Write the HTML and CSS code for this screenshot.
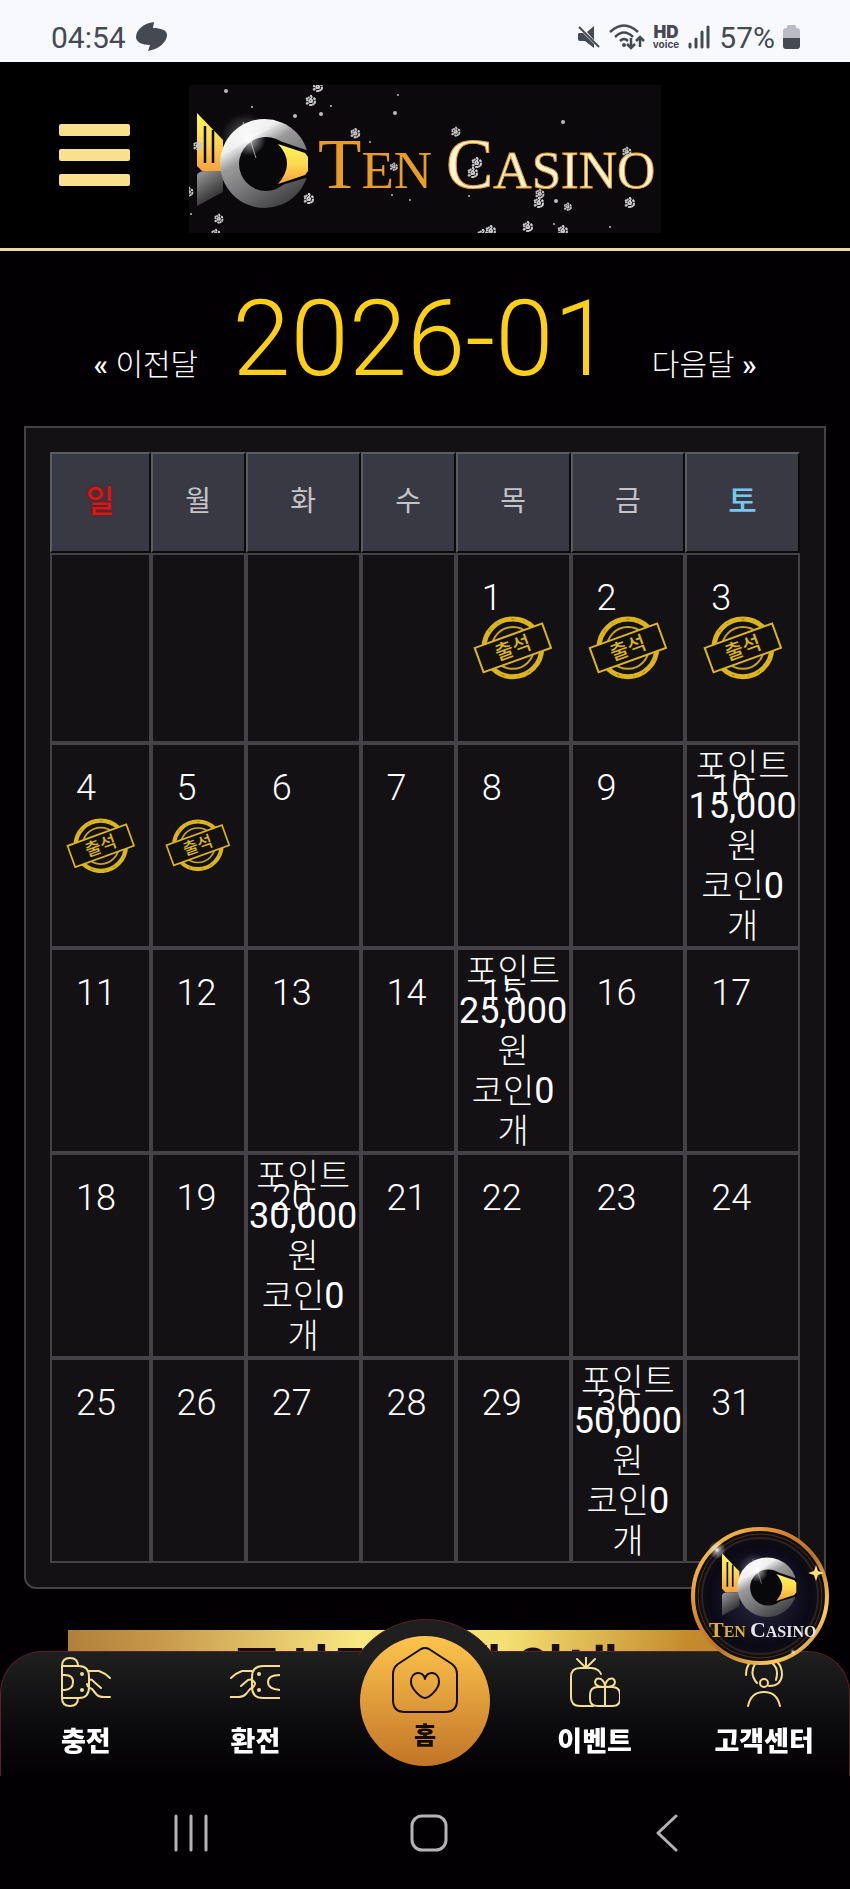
FILE: index.html
```
<!DOCTYPE html>
<html lang="ko">
  <head>
    <meta charset="UTF-8" />
    <meta name="viewport" content="width=device-width, initial-scale=1.0" />
    <title>Ten Casino</title>
    <link rel="stylesheet" href="styles.css">
  </head>
  <body>
    <!-- Shared graphics -->
    <svg class="defs" width="0" height="0" aria-hidden="true">
      <defs>
        <linearGradient id="gold" x1="0" y1="0" x2="0" y2="1">
          <stop offset="0" stop-color="#fff75a" />
          <stop offset="0.5" stop-color="#fdd84f" />
          <stop offset="1" stop-color="#f7a23c" />
        </linearGradient>
        <linearGradient id="silver" x1="0" y1="0" x2="0.6" y2="1">
          <stop offset="0" stop-color="#fff" />
          <stop offset="0.3" stop-color="#f0f0f0" />
          <stop offset="0.45" stop-color="#9a9a9a" />
          <stop offset="0.7" stop-color="#77777a" />
          <stop offset="1" stop-color="#454547" />
        </linearGradient>
        <linearGradient id="tail" x1="0" y1="0" x2="0.5" y2="1">
          <stop offset="0" stop-color="#9d9d9d" />
          <stop offset="1" stop-color="#252527" />
        </linearGradient>
        <radialGradient id="flare">
          <stop offset="0" stop-color="#fff" />
          <stop offset="0.3" stop-color="#fff" stop-opacity="0.5" />
          <stop offset="1" stop-color="#fff" stop-opacity="0" />
        </radialGradient>
        <linearGradient id="ring" x1="0" y1="0" x2="1" y2="1">
          <stop offset="0" stop-color="#ffd75e" />
          <stop offset="0.35" stop-color="#d9822b" />
          <stop offset="0.55" stop-color="#b8742a" />
          <stop offset="0.8" stop-color="#ffc860" />
          <stop offset="1" stop-color="#a9641f" />
        </linearGradient>
        <radialGradient id="night">
          <stop offset="0" stop-color="#2a2944" />
          <stop offset="0.75" stop-color="#0b0916" />
          <stop offset="1" stop-color="#14100f" />
        </radialGradient>
      </defs>
      <symbol id="mark" viewBox="0 0 112 96">
        <circle cx="48" cy="24" r="24" fill="url(#flare)" opacity="0.5" />
        <path d="M0 0 26 27V58H5L0 53Z" fill="url(#gold)" />
        <path d="M8 13v37M16 17v33" stroke="#0b090c" stroke-width="2.5" />
        <path d="M0 62Q2 58 8 58H26V79L0 93Z" fill="url(#tail)" />
        <circle cx="67.500" cy="50.500" r="44.500" fill="url(#silver)" />
        <circle cx="69" cy="51" r="27" fill="#08070a" />
        <path d="M77 26 112 38V64L78 74 94 50Z" fill="#08070a" />
        <path d="M81 31 108 40 111 44V58L108 62 81 71Q99 50 81 31Z" fill="url(#gold)" />
        <circle cx="52" cy="26" r="17" fill="url(#flare)" />
        <path d="M46 9 53 26 59 45M35 36 53 25 72 15" fill="none" stroke="#fff" stroke-width="1" opacity="0.6" />
      </symbol>
      <symbol id="flake" viewBox="0 0 16 16">
        <g fill="none" stroke="#c8c8c8" stroke-width="2" stroke-dasharray="2 1">
          <path d="M8 2V14M3 5 13 11M3 11 13 5" />
          <circle cx="8" cy="8" r="4" />
        </g>
      </symbol>
      <symbol id="stamp" viewBox="0 0 80 64">
        <circle cx="40" cy="32" r="29" fill="none" stroke="#dcb41c" stroke-width="5" />
        <circle cx="40" cy="32" r="29" fill="none" stroke="#8d7414" stroke-width="1" stroke-dasharray="3 9 1 14" />
        <circle cx="40" cy="32" r="21" fill="none" stroke="#c9a51e" stroke-width="2" />
        <g transform="rotate(-20 40 32)">
          <rect x="4" y="19" width="72" height="26" fill="#12100f" stroke="#dcb41c" stroke-width="2" />
          <text x="40" y="39" text-anchor="middle" class="stamp-text">출석</text>
        </g>
      </symbol>
    </svg>

    <div class="status-bar">
      <span class="clock">04:54</span>
      <svg class="app-dot" width="32" height="30" viewBox="0 0 32 30">
        <path d="M18 0C8 1 0 8 0 15 0 20 6 23 14 23L12 29C23 27 31 20 31 13 31 8 25 6 17 6Z" fill="#454a52" />
      </svg>
      <div class="status-icons">
        <svg width="24" height="24" viewBox="0 0 24 24">
          <path d="M17 1V15L10 7ZM1 9Q1 8 3 8H6L17 19V23L8 16H3Q1 16 1 14Z" fill="#454a52" />
          <path d="M2 2 22 22" stroke="#454a52" stroke-width="2" />
        </svg>
        <svg width="36" height="28" viewBox="0 0 36 28">
          <g fill="none" stroke="#454a52" stroke-width="2.500">
            <path d="M1 9Q15-4 29 9M6 14Q15 5 24 14M11 18Q15 14 19 18" />
            <path d="M22 15V25M18 21l4 4 4-4M31 24V14M27 18l4-4 4 4" />
          </g>
          <circle cx="15" cy="22" r="2" fill="#454a52" />
        </svg>
        <span class="hd"><b>HD</b><small>voice</small></span>
        <svg width="24" height="24" viewBox="0 0 24 24">
          <path d="M3 19V22M9 14V22M15 7V22M21 2V22" stroke="#454a52" stroke-width="3" stroke-linecap="round" />
        </svg>
        <span class="battery-level">57%</span>
        <svg width="17" height="26" viewBox="0 0 17 26">
          <path d="M4 2Q4 1 6 1H11Q13 1 13 2V4H14Q17 4 17 7V14H0V7Q0 4 3 4H4Z" fill="#b9bcc4" />
          <path d="M0 14H17V22Q17 25 14 25H3Q0 25 0 22Z" fill="#454a52" />
        </svg>
      </div>
    </div>

    <header class="header">
      <button class="menu-btn" aria-label="메뉴">
        <span></span>
        <span></span>
        <span></span>
      </button>
      <a href="#" class="logo" aria-label="Ten Casino">
        <svg width="472" height="148" viewBox="0 0 472 148">
          <rect width="472" height="148" fill="#0b090c" />
          <use href="#mark" x="8" y="28" width="112" height="96" />
          <text y="103" class="logo-text">
            <tspan x="129" class="ten cap">T</tspan><tspan class="ten">EN</tspan>
            <tspan x="257" class="casino cap">C</tspan><tspan class="casino">ASINO</tspan>
          </text>
          <use href="#flake" x="114" y="8" width="16" height="16" />
          <use href="#flake" x="121" y="-6" width="16" height="16" />
          <use href="#flake" x="159" y="41" width="15" height="15" />
          <use href="#flake" x="199" y="76" width="12" height="12" />
          <use href="#flake" x="112" y="106" width="16" height="16" />
          <use href="#flake" x="2" y="54" width="14" height="14" />
          <use href="#flake" x="-7" y="100" width="14" height="14" />
          <use href="#flake" x="23" y="127" width="14" height="14" />
          <use href="#flake" x="20" y="142" width="14" height="14" />
          <use href="#flake" x="260" y="40" width="14" height="14" />
          <use href="#flake" x="280" y="70" width="16" height="16" />
          <use href="#flake" x="276" y="80" width="16" height="16" />
          <use href="#flake" x="342" y="110" width="16" height="16" />
          <use href="#flake" x="344" y="102" width="14" height="14" />
          <use href="#flake" x="373" y="116" width="12" height="12" />
          <use href="#flake" x="433" y="110" width="16" height="16" />
          <use href="#flake" x="431" y="60" width="14" height="14" />
          <use href="#flake" x="331" y="134" width="16" height="16" />
          <use href="#flake" x="366" y="138" width="16" height="16" />
          <use href="#flake" x="294" y="138" width="16" height="16" />
          <use href="#flake" x="286" y="142" width="16" height="16" />
          <g fill="#bbb">
            <circle cx="37" cy="6" r="2" /><circle cx="63" cy="22" r="1" />
            <circle cx="106" cy="31" r="2" /><circle cx="132" cy="29" r="2" />
            <circle cx="142" cy="21" r="1" /><circle cx="209" cy="10" r="1" />
            <circle cx="206" cy="28" r="2" /><circle cx="181" cy="57" r="1" />
            <circle cx="374" cy="37" r="2" /><circle cx="203" cy="110" r="1" />
            <circle cx="221" cy="115" r="1" /><circle cx="280" cy="111" r="1" />
            <circle cx="367" cy="116" r="2" /><circle cx="365" cy="139" r="1" />
            <circle cx="421" cy="142" r="1" /><circle cx="2" cy="129" r="1" />
          </g>
        </svg>
      </a>
    </header>

    <main>
      <div class="month-nav">
        <a href="#" class="prev"><span class="arrow">«</span> 이전달</a>
        <h1>2026-01</h1>
        <a href="#" class="next">다음달 <span class="arrow">»</span></a>
      </div>

      <section class="calendar">
        <table>
          <colgroup>
            <col class="narrow"><col class="slim"><col><col class="slim"><col><col><col>
          </colgroup>
          <thead>
            <tr>
              <th class="sun">일</th>
              <th>월</th>
              <th>화</th>
              <th>수</th>
              <th>목</th>
              <th>금</th>
              <th class="sat">토</th>
            </tr>
          </thead>
          <tbody>
            <tr class="first">
              <td></td>
              <td></td>
              <td></td>
              <td></td>
              <td><span class="day">1</span><svg class="stamp" viewBox="0 0 80 64"><use href="#stamp" /></svg></td>
              <td><span class="day">2</span><svg class="stamp" viewBox="0 0 80 64"><use href="#stamp" /></svg></td>
              <td><span class="day">3</span><svg class="stamp" viewBox="0 0 80 64"><use href="#stamp" /></svg></td>
            </tr>
            <tr>
              <td><span class="day">4</span><svg class="stamp" viewBox="0 0 80 64"><use href="#stamp" /></svg></td>
              <td><span class="day">5</span><svg class="stamp" viewBox="0 0 80 64"><use href="#stamp" /></svg></td>
              <td><span class="day">6</span></td>
              <td><span class="day">7</span></td>
              <td><span class="day">8</span></td>
              <td><span class="day">9</span></td>
              <td><span class="day">10</span><div class="reward">포인트<b>15,000</b>원<br>코인<b>0</b>개</div></td>
            </tr>
            <tr>
              <td><span class="day">11</span></td>
              <td><span class="day">12</span></td>
              <td><span class="day">13</span></td>
              <td><span class="day">14</span></td>
              <td><span class="day">15</span><div class="reward">포인트<b>25,000</b>원<br>코인<b>0</b>개</div></td>
              <td><span class="day">16</span></td>
              <td><span class="day">17</span></td>
            </tr>
            <tr>
              <td><span class="day">18</span></td>
              <td><span class="day">19</span></td>
              <td><span class="day">20</span><div class="reward">포인트<b>30,000</b>원<br>코인<b>0</b>개</div></td>
              <td><span class="day">21</span></td>
              <td><span class="day">22</span></td>
              <td><span class="day">23</span></td>
              <td><span class="day">24</span></td>
            </tr>
            <tr>
              <td><span class="day">25</span></td>
              <td><span class="day">26</span></td>
              <td><span class="day">27</span></td>
              <td><span class="day">28</span></td>
              <td><span class="day">29</span></td>
              <td><span class="day">30</span><div class="reward">포인트<b>50,000</b>원<br>코인<b>0</b>개</div></td>
              <td><span class="day">31</span></td>
            </tr>
          </tbody>
        </table>
      </section>

      <div class="banner">고사탄 단계 안내</div>
    </main>

    <a href="#" class="float-badge" aria-label="Ten Casino">
      <svg width="138" height="138" viewBox="0 0 138 138">
        <circle cx="69" cy="69" r="67" fill="url(#night)" stroke="url(#ring)" stroke-width="4" />
        <circle cx="69" cy="69" r="62" fill="none" stroke="#4a3420" stroke-width="1" />
        <circle cx="69" cy="69" r="58" fill="none" stroke="#2b2320" stroke-width="2" />
        <use href="#mark" x="31" y="26" width="75" height="65" />
        <text x="18" y="110" class="badge-text"><tspan class="badge-ten cap">T</tspan><tspan class="badge-ten">EN</tspan> <tspan class="cap">C</tspan>ASINO</text>
        <path d="M125 38 127 44 133 46 127 48 125 54 123 48 117 46 123 44Z" fill="#ffe07a" />
        <circle cx="26" cy="23" r="9" fill="url(#flare)" />
        <circle cx="102" cy="125" r="3" fill="url(#flare)" />
      </svg>
    </a>

    <div class="bottom">
      <nav class="tabs">
        <a href="#">
          <svg width="50" height="50" viewBox="0 0 50 50">
            <path d="M1 9V41M1 9H18Q28 9 28 20V30Q28 41 18 41H1M1 9Q1 1 9 1T17 9M1 41Q1 49 9 49T17 41M1 18H4Q12 18 12 25T4 33H1" />
            <path d="M28 14H38Q44 16 49 21M28 24Q30 21 32 24L40 31M26 27Q26 30 31 32L36 38Q38 40 43 40H49" />
            <circle class="dot" cx="21" cy="17" r="2" /><circle class="dot" cx="21" cy="33" r="2" />
          </svg>
          충전
        </a>
        <a href="#">
          <svg width="50" height="50" viewBox="0 0 50 50">
            <path d="M50 9H33Q22 9 22 20V30Q22 41 33 41H50M50 18Q38 18 38 25T50 33" />
            <path d="M1 21Q6 16 12 14H22M11 29 18 23Q22 21 25 26 25 30 20 32L16 37Q13 40 9 40H0" />
            <circle class="dot" cx="29" cy="17" r="2" /><circle class="dot" cx="29" cy="33" r="2" />
          </svg>
          환전
        </a>
        <a href="#" class="home">
          <span class="home-disc">
            <svg width="68" height="68" viewBox="0 0 68 68">
              <path d="M30 3Q34 1 38 3L61 18Q66 22 66 28V54Q66 66 54 66H14Q2 66 2 54V28Q2 22 7 18Z" />
              <path d="M34 33C33 25 20 24 20 36 20 43 30 52 34 52S48 43 48 36C48 24 35 25 34 33Z" />
            </svg>
            홈
          </span>
        </a>
        <a href="#">
          <svg width="50" height="50" viewBox="0 0 50 50">
            <path d="M20 49H10Q1 49 1 40V20Q1 11 10 11H22Q29 12 31 17M16 0V11M7 2 16 11 25 2M16 49H23" />
            <path d="M28 30H42Q50 30 50 38V42Q50 49 42 49H28Q20 49 20 42V38Q20 30 28 30ZM35 49V30Q25 30 25 25 26 20 31 22 35 25 35 30 35 25 39 22 44 20 45 25 45 30 35 30" />
          </svg>
          이벤트
        </a>
        <a href="#">
          <svg width="50" height="50" viewBox="0 0 50 50">
            <path d="M9 49Q12 35 25 35T41 49M18 26Q10 17 16 7M7 18Q7 1 25 1T43 18Q42 29 30 29M37 23Q40 12 34 7" />
            <circle cx="25" cy="26" r="4" />
          </svg>
          고객센터
        </a>
      </nav>
      <div class="system-bar">
        <button aria-label="최근 앱">
          <svg width="38" height="38" viewBox="0 0 38 38"><path d="M4 2V36M19 2V36M34 2V36" /></svg>
        </button>
        <button aria-label="홈 화면">
          <svg width="38" height="38" viewBox="0 0 38 38"><rect x="2" y="2" width="34" height="34" rx="10" /></svg>
        </button>
        <button aria-label="뒤로">
          <svg width="38" height="38" viewBox="0 0 38 38"><path d="M28 2 10 19 28 36" /></svg>
        </button>
      </div>
    </div>
  </body>
</html>
```
FILE: styles.css
```
:root {
  --gold: #f9e08c;
  --line: #444246;
  --cell-bg: #131114;
  --status: #454a52;
}
* {
  box-sizing: border-box;
  margin: 0;
  padding: 0;
}
body {
  font-family: Roboto, "Noto Sans CJK KR", sans-serif;
  background: #020003;
  color: #fff;
  min-height: 100vh;
}
a {
  color: inherit;
  text-decoration: none;
}
button {
  background: none;
  border: none;
  cursor: pointer;
}
svg {
  display: block;
}
.defs {
  position: absolute;
}

/* Status bar */
.status-bar {
  display: flex;
  align-items: center;
  height: 62px;
  padding: 12px 50px 0 51px;
  background: #f7f9ff;
  color: var(--status);
  font-size: 30px;
}
.app-dot {
  margin-left: 10px;
}
.status-icons {
  display: flex;
  align-items: center;
  gap: 8px;
  margin-left: auto;
}
.hd {
  display: flex;
  flex-direction: column;
  align-items: center;
  font-family: Inter, sans-serif;
  font-weight: 700;
}
.hd b {
  font-size: 17px;
  line-height: 13px;
}
.hd small {
  font-size: 10px;
  line-height: 10px;
}

/* Header */
.header {
  display: grid;
  grid-template-columns: 1fr auto 1fr;
  align-items: center;
  padding: 23px 0 15px;
  background: #000;
  border-bottom: 3px solid #e9d9ac;
}
.menu-btn {
  display: flex;
  flex-direction: column;
  gap: 13px;
  width: 71px;
  margin-left: 59px;
  padding-bottom: 8px;
}
.menu-btn span {
  height: 12px;
  border-radius: 2px;
  background: var(--gold);
}
.logo-text {
  font-family: "Liberation Serif", serif;
  font-size: 53px;
}
.logo-text .cap {
  font-size: 71px;
}
.ten {
  fill: #e99d24;
}
.casino {
  fill: #fff3d6;
  stroke: #e99d24;
  stroke-width: 1px;
}

/* Month switcher */
.month-nav {
  display: flex;
  justify-content: center;
  align-items: baseline;
  padding: 29px 0 26px;
  font-size: 30px;
  font-weight: 300;
}
.month-nav h1 {
  margin: 0 40px 0 34px;
  color: #fdd017;
  font-size: 105px;
  font-weight: 300;
  line-height: 120px;
}
.arrow {
  font-weight: 500;
}

/* Calendar */
.calendar {
  margin: 0 24px;
  padding: 24px;
  background: var(--cell-bg);
  border: 2px solid var(--line);
  border-radius: 0 0 12px 12px;
}
table {
  width: 100%;
  table-layout: fixed;
  border-collapse: separate;
  border-spacing: 0;
}
.narrow {
  width: 13.4%;
}
.slim {
  width: 12.7%;
}
th {
  height: 101px;
  background: #393943;
  border: 2px solid;
  border-color: #5c5b60 #0a090c #0a090c #5c5b60;
  color: #c4c3c8;
  font-size: 28px;
  font-weight: 400;
  padding-bottom: 8px;
}
.sun,
.sat {
  font-size: 31px;
  font-weight: 500;
}
.sun {
  color: #d01a1e;
  text-shadow: 0 0 3px #900;
}
.sat {
  color: #74c8f2;
}
td {
  position: relative;
  height: 205px;
  border: 2px solid var(--line);
  text-align: center;
  vertical-align: middle;
}
.first td {
  height: 190px;
}
.day {
  position: absolute;
  top: 23px;
  left: 24px;
  font-size: 36px;
  font-weight: 300;
  line-height: 40px;
}
.stamp {
  width: 72%;
  margin: 0 auto;
}
.stamp-text {
  fill: #dcb41c;
  font-family: "Noto Sans CJK KR", sans-serif;
  font-size: 20px;
  font-weight: 500;
}
.reward {
  position: relative;
  font-size: 34px;
  font-weight: 300;
  line-height: 40px;
}
.reward b {
  font-size: 36px;
  font-weight: 400;
}

/* Notice banner */
.banner {
  height: 110px;
  margin: 41px 68px 0;
  background: linear-gradient(100deg, #b07f3a 0%, #c6964a 12%, #f9e882 40%, #f3df72 60%, #c58a2c 85%, #b07f3a 100%);
  color: #1a0d08;
  font-size: 56px;
  font-weight: 700;
  line-height: 84px;
  text-align: center;
}

/* Floating badge */
.float-badge {
  position: fixed;
  right: 21px;
  bottom: 224px;
  z-index: 3;
}
.badge-text {
  font-family: "Liberation Serif", serif;
  font-size: 16px;
  font-weight: 700;
  fill: #e4e4ea;
}
.badge-text .cap {
  font-size: 22px;
}
.badge-ten {
  fill: #d9b13a;
}

/* Bottom tabs */
.bottom {
  position: fixed;
  left: 0;
  right: 0;
  bottom: 0;
  z-index: 2;
}
.tabs {
  position: relative;
  display: grid;
  grid-template-columns: repeat(5, 1fr);
  height: 125px;
  background: linear-gradient(#1f1f20, #0b0a0c 60%, #020003);
  border: 1px solid #5a2229;
  border-bottom: none;
  border-radius: 42px 42px 0 0;
}
.tabs::before {
  content: "";
  position: absolute;
  top: -33px;
  left: 50%;
  width: 162px;
  height: 162px;
  margin-left: -81px;
  border: 1px solid #5a2229;
  border-radius: 50%;
  background: #1f1f20;
  clip-path: inset(0 0 128px 0);
}
.tabs a {
  display: flex;
  flex-direction: column;
  align-items: center;
  gap: 15px;
  padding-top: 5px;
  font-size: 27px;
  font-weight: 900;
  line-height: 40px;
}
.tabs svg {
  fill: none;
  stroke: #f3dd8e;
  stroke-width: 2;
  stroke-linecap: round;
  stroke-linejoin: round;
}
.tabs .dot {
  fill: #f3dd8e;
  stroke: none;
}
.tabs .home {
  position: relative;
  padding: 0;
}
.home-disc {
  display: flex;
  flex-direction: column;
  align-items: center;
  flex-shrink: 0;
  width: 130px;
  height: 130px;
  margin-top: -16px;
  padding-top: 10px;
  border-radius: 50%;
  background: linear-gradient(#fdc54c, #c27428);
  color: #150a00;
  font-size: 24px;
  line-height: 44px;
}
.home-disc svg {
  stroke: #150a00;
}

/* Phone navigation */
.system-bar {
  display: grid;
  grid-template-columns: repeat(3, 1fr);
  align-items: center;
  justify-items: center;
  height: 113px;
  padding: 0 64px 0 72px;
  background: #020003;
}
.system-bar svg {
  fill: none;
  stroke: #b5b3b8;
  stroke-width: 3;
  stroke-linecap: round;
  stroke-linejoin: round;
}
```
